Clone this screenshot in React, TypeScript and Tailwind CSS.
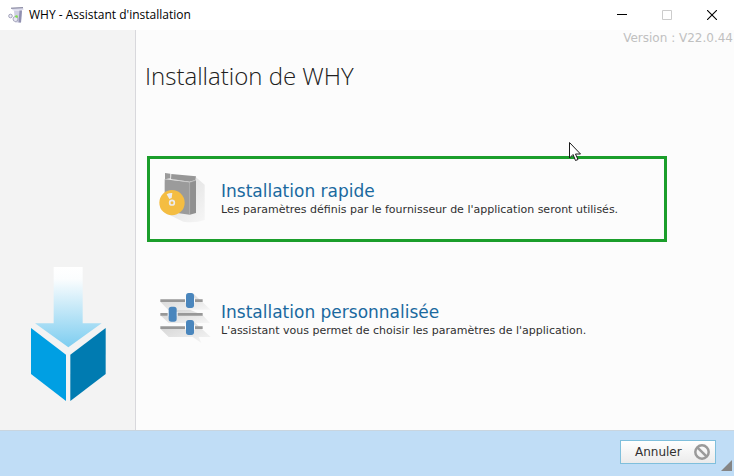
import type { ReactNode } from "react";

function AppIcon() {
  return (
    <svg viewBox="0 0 16 16" className="size-4 shrink-0" aria-hidden="true">
      <path d="M3 1 15 .5 15.500 3 5 3.500Z" fill="#dcdcec" />
      <path d="M3 1.200 15 .7" stroke="#6c6c88" strokeWidth=".9" />
      <path d="M6 3.500h8L13 15.500H7Z" fill="#cfcfe2" />
      <path d="M11.500 3.500h2.500L13 15.500h-2.500Z" fill="#9090b0" />
      <circle cx="2.500" cy="9" r="1.800" fill="#ececf6" stroke="#9a9ab2" strokeWidth=".9" />
      <circle cx="7.500" cy="12" r="2.500" fill="#e8e8f3" stroke="#9898b0" strokeWidth=".8" />
      <circle cx="8.500" cy="9.500" r="1.300" fill="#7ee04a" />
    </svg>
  );
}

function BoxLogo() {
  return (
    <svg viewBox="60 33 228 408" className="h-[136px] w-[76px]" aria-hidden="true">
      <defs>
        <linearGradient id="arrow" x1="0" y1="0" x2="0" y2="1">
          <stop offset="0" stopColor="#ffffff" />
          <stop offset=".15" stopColor="#fbfdfe" />
          <stop offset="1" stopColor="#7dcdf0" />
        </linearGradient>
      </defs>
      <path d="M131 36h87v169h57L175 277 75 205h56Z" fill="url(#arrow)" />
      <path d="M63 219 168 299V438L63 357Z" fill="#009fe3" />
      <path d="M287 219 181 299V438L287 357Z" fill="#007bb1" />
    </svg>
  );
}

function PackageIcon() {
  return (
    <svg viewBox="54 69 153 156" className="h-[52px] w-[51px] shrink-0 overflow-visible" aria-hidden="true">
      <defs>
        <linearGradient id="pack-shadow" x1="0" y1="0" x2="1" y2="1">
          <stop offset="0" stopColor="#dadada" />
          <stop offset="1" stopColor="#f6f6f6" />
        </linearGradient>
      </defs>
      <path d="M168 82 194 104V210Q165 220 130 215L72 187 120 130Z" fill="url(#pack-shadow)" />
      <path d="M74 88 149 97V194L74 184Z" fill="#9b9b9b" />
      <path d="M149 97 168 91V189L149 194Z" fill="#909090" />
      <path d="M75 69 91 71V85L75 88Z" fill="#9b9b9b" />
      <path d="M94 72 168 79 166 90 149 95 93 87Z" fill="#979797" />
      <path d="M75 89 92 87 149 97 168 91" fill="none" stroke="#b9b9b9" strokeWidth="1.500" />
      <path d="M149 97V194" stroke="#b4b4b4" strokeWidth="1.500" />
      <circle cx="96" cy="158" r="38" fill="#f4bd42" />
      <path d="M80 133Q88 128 97 129L95 144 88 147Z" fill="#ededed" />
      <circle cx="96" cy="158" r="7" fill="#f4bd42" stroke="#ececec" strokeWidth="5" />
    </svg>
  );
}

function SlidersIcon() {
  return (
    <svg viewBox="54 57 153 156" className="h-[52px] w-[51px] shrink-0 overflow-visible" aria-hidden="true">
      <defs>
        <linearGradient id="slider-shadow" x1="0" y1="0" x2="1" y2="1">
          <stop offset="0" stopColor="#d2d2d2" />
          <stop offset="1" stopColor="#f6f6f6" />
        </linearGradient>
      </defs>
      <path d="M61 80H138L162 58 212 104H84Z" fill="url(#slider-shadow)" />
      <path d="M61 121H87L110 104H150L188 120 210 144H86Z" fill="url(#slider-shadow)" />
      <path d="M61 161H138L162 140 212 186H176L184 204 158 186H86Z" fill="url(#slider-shadow)" />
      <path d="M61 73h127v8H61ZM61 114h127v8H61ZM61 154h127v8H61Z" fill="#989898" />
      <path d="M135 70h30v13h-30ZM83 111h30v13H83ZM135 151h30v13h-30Z" fill="#fcfcfc" />
      <g fill="#4a86bd">
        <rect x="138" y="54" width="24" height="45" rx="8" />
        <rect x="86" y="95" width="24" height="45" rx="8" />
        <rect x="138" y="135" width="24" height="45" rx="8" />
      </g>
    </svg>
  );
}

type OptionProps = {
  icon: ReactNode;
  title: string;
  description: string;
  selected?: boolean;
};

function InstallOption({ icon, title, description, selected }: OptionProps) {
  return (
    <button
      type="button"
      className={`flex w-full items-center gap-3 border-[3px] px-2 py-3.5 text-left ${
        selected ? "border-[#1b9e2b]" : "border-transparent"
      }`}
    >
      {icon}
      <span className="flex flex-col">
        <span className="text-[17px] leading-[22px] text-[#1a699f]">{title}</span>
        <span className="text-[11px] leading-4 text-[#303030]">{description}</span>
      </span>
    </button>
  );
}

export default function App() {
  return (
    <div className="relative flex min-h-screen flex-col bg-[#fcfcfc] font-['DejaVu_Sans',sans-serif]">
      {/* Title bar */}
      <header className="flex h-[30px] items-center bg-white pl-2">
        <AppIcon />
        <h1 className="ml-[5px] flex-1 font-['Open_Sans',sans-serif] text-[12px] leading-4 text-black">
          WHY - Assistant d'installation
        </h1>
        <button type="button" aria-label="Réduire" className="flex h-full w-[45px] items-center justify-center">
          <svg viewBox="0 0 10 10" className="size-2.5" aria-hidden="true">
            <path d="M0 4h10v1H0Z" fill="#000" />
          </svg>
        </button>
        <button type="button" aria-label="Agrandir" disabled className="flex h-full w-[45px] items-center justify-center">
          <svg viewBox="0 0 10 10" className="size-2.5" aria-hidden="true">
            <path d="M.5.5h9v9h-9Z" fill="none" stroke="#ccc" />
          </svg>
        </button>
        <button type="button" aria-label="Fermer" className="flex h-full w-[45px] items-center justify-center">
          <svg viewBox="0 0 10 10" className="size-2.5" aria-hidden="true">
            <path d="M0 0 10 10M10 0 0 10" stroke="#000" strokeWidth="1.100" />
          </svg>
        </button>
      </header>

      <div className="flex flex-1">
        <aside className="flex w-[136px] shrink-0 items-end justify-center border-r border-[#d8d8dc] bg-[#f3f3f3] pb-7">
          <BoxLogo />
        </aside>

        <main className="flex-1">
          <p className="pr-px text-right text-[12px] leading-4 text-[#c0c0c0]">Version : V22.0.44</p>
          <h2 className="mt-3.5 pl-[9px] font-['Open_Sans',sans-serif] text-[24px] leading-8 font-light text-[#202020]">
            Installation de WHY
          </h2>
          <div className="mt-16 mr-[67px] ml-[11px] flex flex-col gap-[35px]">
            <InstallOption
              icon={<PackageIcon />}
              title="Installation rapide"
              description="Les paramètres définis par le fournisseur de l'application seront utilisés."
              selected
            />
            <InstallOption
              icon={<SlidersIcon />}
              title="Installation personnalisée"
              description="L'assistant vous permet de choisir les paramètres de l'application."
            />
          </div>
        </main>
      </div>

      <footer className="flex items-start justify-end border-t border-[#c9d5df] bg-[#c0ddf6] pt-[9px] pr-[18px] pb-3">
        <button
          type="button"
          className="flex h-6 w-24 items-center justify-between border border-[#7fbfdc] bg-linear-to-b from-white to-[#ebebeb] pr-[5px] pl-3.5 text-[12px] text-[#303030]"
        >
          Annuler
          <svg viewBox="0 0 16 16" className="size-4" fill="none" stroke="#9a9a9a" strokeWidth="2.500" aria-hidden="true">
            <circle cx="8" cy="8" r="6.700" />
            <path d="M3.300 3.300 12.700 12.700" />
          </svg>
        </button>
      </footer>

      {/* Resize grip */}
      <svg viewBox="0 0 11 11" className="absolute right-0.5 bottom-[5px] size-[11px]" aria-hidden="true">
        <path d="M11 0V11H0Z" fill="#858585" />
      </svg>

      {/* Mouse pointer */}
      <svg viewBox="0 0 12 19" className="absolute top-[142px] left-[569px] h-[19px] w-3" aria-hidden="true">
        <path d="M.5.5V16L4 12.500 6.500 18.500 9 17.500 6.500 12H11.500Z" fill="#fff" stroke="#1a1a1a" />
      </svg>
    </div>
  );
}
